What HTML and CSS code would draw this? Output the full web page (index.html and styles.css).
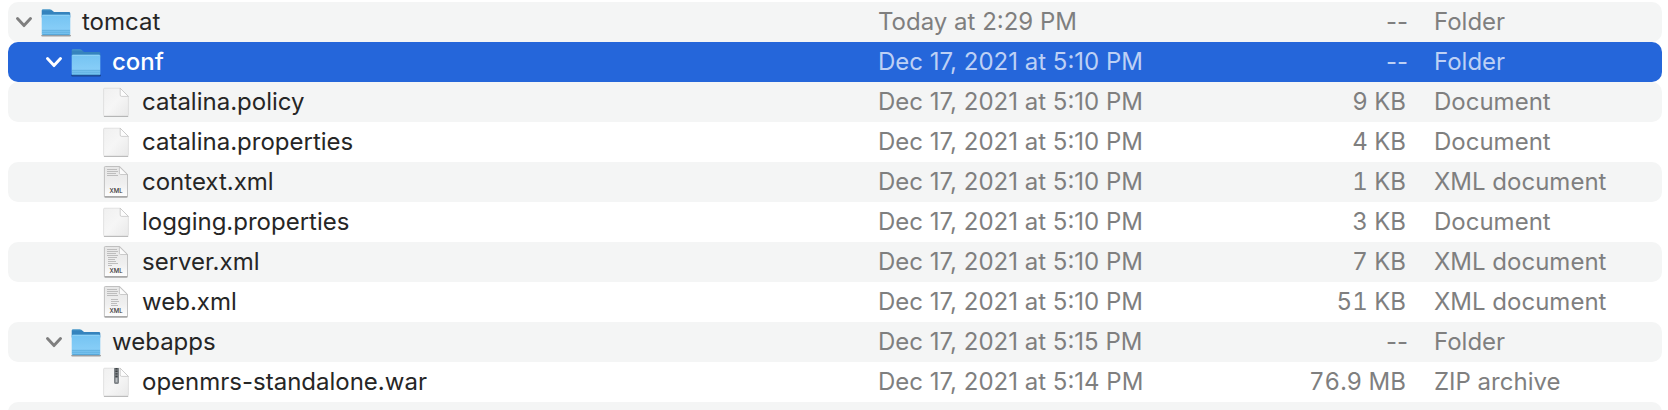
FILE: index.html
```
<!DOCTYPE html>
<html lang="en">
<head>
  <meta charset="UTF-8">
  <meta name="viewport" content="width=device-width, initial-scale=1.0">
  <title>tomcat</title>
  <link rel="stylesheet" href="styles.css">
</head>
<body>
  <svg class="sprite" aria-hidden="true">
    <defs>
      <linearGradient id="folder-back" x1="0" y1="0" x2="0" y2="1">
        <stop offset="0" stop-color="#4a9bcb"/>
        <stop offset="0.25" stop-color="#3583bd"/>
        <stop offset="1" stop-color="#3583bd"/>
      </linearGradient>
      <linearGradient id="folder-front" x1="0" y1="0" x2="0" y2="1">
        <stop offset="0" stop-color="#74c3f2"/>
        <stop offset="0.7" stop-color="#86cdf7"/>
        <stop offset="1" stop-color="#6dbdec"/>
      </linearGradient>
      <linearGradient id="paper" x1="0" y1="0" x2="1" y2="1">
        <stop offset="0" stop-color="#f0f0f0"/>
        <stop offset="0.5" stop-color="#f6f6f6"/>
        <stop offset="1" stop-color="#e9e9e9"/>
      </linearGradient>
      <linearGradient id="paper-xml" x1="0" y1="0" x2="0" y2="1">
        <stop offset="0" stop-color="#e6e6e6"/>
        <stop offset="0.6" stop-color="#f0f0f0"/>
        <stop offset="1" stop-color="#ffffff"/>
      </linearGradient>
    </defs>
    <symbol id="chevron" viewBox="0 0 16 16">
      <path d="M1.5 4.6 8 11.6 14.5 4.6" fill="none" stroke="currentColor" stroke-width="2.9" stroke-linecap="round" stroke-linejoin="round"/>
    </symbol>
    <symbol id="folder" viewBox="0 0 32 32">
      <path d="M2 29.6h28.2" stroke="#000" stroke-opacity="0.35" stroke-width="1.6" stroke-linecap="round"/>
      <path d="M1.7 4.6q0-1.4 1.4-1.4h6.6q1 0 1.7.6l2 1.7q.7.6 1.7.6h13.8q1.4 0 1.4 1.4v4H1.7z" fill="url(#folder-back)"/>
      <path d="M1.7 9.8q0-1.1 1.1-1.1h26.4q1.1 0 1.1 1.1v18q0 1.2-1.2 1.2H2.9q-1.2 0-1.2-1.2z" fill="url(#folder-front)"/>
      <path d="M2.6 9.3h26.8" stroke="#9cd9fa" stroke-width="0.8"/>
      <path d="M2 24.4h28M2 26.2h28" stroke="#58a9da" stroke-width="0.7"/>
      <path d="M2.4 28.7h27.2" stroke="#4c9acb" stroke-width="0.8"/>
    </symbol>
    <symbol id="file" viewBox="0 0 32 32">
      <path d="M4.4 30.3h23.3" stroke="#000" stroke-opacity="0.3" stroke-width="1.2" stroke-linecap="round"/>
      <path d="M3.6 3.2q0-1 1-1h15.6l8.2 8.2v18.4q0 1.2-1.2 1.2H4.8q-1.2 0-1.2-1.2z" fill="url(#paper)" stroke="#d2d2d2" stroke-width="0.6"/>
      <path d="M20.2 2.2v6.8q0 1.4 1.4 1.4h6.8z" fill="#fdfdfd" stroke="#bdbdbd" stroke-width="0.7"/>
    </symbol>
    <symbol id="xml" viewBox="0 0 32 32">
      <path d="M4.4 1.4q0-.9.9-.9h14.4l7.8 7.8v22q0 .7-.7.7H5.1q-.7 0-.7-.7z" fill="url(#paper-xml)" stroke="#bababa" stroke-width="0.9"/>
      <path d="M4.6 30.9h22.8" stroke="#858585" stroke-width="1"/>
      <path d="M19.4.8v6.4q0 1.3 1.3 1.3h6.6z" fill="#fbfbfb" stroke="#b8b8b8" stroke-width="0.7"/>
    </symbol>
    <symbol id="zip" viewBox="0 0 32 32">
      <use href="#file"/>
      <path d="M14 2h5v14.5q0 1.4-1.4 1.4h-2.2q-1.4 0-1.4-1.4z" fill="#7e8387"/>
      <path d="M16.5 2v10" stroke="#3d4144" stroke-width="2.2" stroke-dasharray="1.4 1.2"/>
      <path d="M16.5 11.8v4.4" stroke="#b9bdc0" stroke-width="1.8"/>
    </symbol>
  </svg>

  <main>
    <table class="file-list" aria-label="Files">
      <colgroup>
        <col>
        <col class="col-date">
        <col class="col-size">
        <col class="col-kind">
      </colgroup>
      <tbody>
        <tr>
          <td>
            <div class="name">
              <button class="toggle" type="button" aria-expanded="true" aria-label="Collapse tomcat"><svg><use href="#chevron"/></svg></button>
              <svg class="icon"><use href="#folder"/></svg>
              <span>tomcat</span>
            </div>
          </td>
          <td>Today at 2:29 PM</td>
          <td class="size none">--</td>
          <td>Folder</td>
        </tr>
        <tr class="selected" aria-selected="true">
          <td>
            <div class="name level-1">
              <button class="toggle" type="button" aria-expanded="true" aria-label="Collapse conf"><svg><use href="#chevron"/></svg></button>
              <svg class="icon"><use href="#folder"/></svg>
              <span>conf</span>
            </div>
          </td>
          <td>Dec 17, 2021 at 5:10 PM</td>
          <td class="size none">--</td>
          <td>Folder</td>
        </tr>
        <tr>
          <td>
            <div class="name level-2">
              <svg class="icon"><use href="#file"/></svg>
              <span>catalina.policy</span>
            </div>
          </td>
          <td>Dec 17, 2021 at 5:10 PM</td>
          <td class="size">9 KB</td>
          <td>Document</td>
        </tr>
        <tr>
          <td>
            <div class="name level-2">
              <svg class="icon"><use href="#file"/></svg>
              <span>catalina.properties</span>
            </div>
          </td>
          <td>Dec 17, 2021 at 5:10 PM</td>
          <td class="size">4 KB</td>
          <td>Document</td>
        </tr>
        <tr>
          <td>
            <div class="name level-2">
              <svg class="icon" viewBox="0 0 32 32">
                <use href="#xml"/>
                <path class="lines" d="M7 3.5h10M7 5.5h11M7 7.5h9M7 9.5h11"/>
                <text class="icon-label" x="16" y="27" text-anchor="middle">XML</text>
              </svg>
              <span>context.xml</span>
            </div>
          </td>
          <td>Dec 17, 2021 at 5:10 PM</td>
          <td class="size">1 KB</td>
          <td>XML document</td>
        </tr>
        <tr>
          <td>
            <div class="name level-2">
              <svg class="icon"><use href="#file"/></svg>
              <span>logging.properties</span>
            </div>
          </td>
          <td>Dec 17, 2021 at 5:10 PM</td>
          <td class="size">3 KB</td>
          <td>Document</td>
        </tr>
        <tr>
          <td>
            <div class="name level-2">
              <svg class="icon" viewBox="0 0 32 32">
                <use href="#xml"/>
                <path class="lines" d="M7 3.5h10M7 5.5h11M7 7.5h9M7 9.5h11M8 11.5h9M8 13.5h7M8 15.5h8M8 17.5h10M8 19.5h4"/>
                <text class="icon-label" x="16" y="27" text-anchor="middle">XML</text>
              </svg>
              <span>server.xml</span>
            </div>
          </td>
          <td>Dec 17, 2021 at 5:10 PM</td>
          <td class="size">7 KB</td>
          <td>XML document</td>
        </tr>
        <tr>
          <td>
            <div class="name level-2">
              <svg class="icon" viewBox="0 0 32 32">
                <use href="#xml"/>
                <path class="lines" d="M7 3.5h10M7 5.5h11M7 7.5h10M7 9.5h11M11 13.5h7M11 15.5h8M11 17.5h6M11 19.5h7"/>
                <text class="icon-label" x="16" y="27" text-anchor="middle">XML</text>
              </svg>
              <span>web.xml</span>
            </div>
          </td>
          <td>Dec 17, 2021 at 5:10 PM</td>
          <td class="size">51 KB</td>
          <td>XML document</td>
        </tr>
        <tr>
          <td>
            <div class="name level-1">
              <button class="toggle" type="button" aria-expanded="true" aria-label="Collapse webapps"><svg><use href="#chevron"/></svg></button>
              <svg class="icon"><use href="#folder"/></svg>
              <span>webapps</span>
            </div>
          </td>
          <td>Dec 17, 2021 at 5:15 PM</td>
          <td class="size none">--</td>
          <td>Folder</td>
        </tr>
        <tr>
          <td>
            <div class="name level-2">
              <svg class="icon"><use href="#zip"/></svg>
              <span>openmrs-standalone.war</span>
            </div>
          </td>
          <td>Dec 17, 2021 at 5:14 PM</td>
          <td class="size">76.9 MB</td>
          <td>ZIP archive</td>
        </tr>
        <tr>
          <td></td>
          <td></td>
          <td></td>
          <td></td>
        </tr>
      </tbody>
    </table>
  </main>
</body>
</html>
```
FILE: styles.css
```
:root {
  --stripe: #f4f5f5;
  --selected: #2566da;
  --text: #262626;
  --muted: #7f7f7f;
}

* {
  box-sizing: border-box;
}

body {
  margin: 0;
  background-color: white;
  color: var(--text);
  font-family: Inter, "Liberation Sans", sans-serif;
  font-size: 24px;
  line-height: 32px;
}

main {
  height: 100vh;
  padding: 2px 6px 0 8px;
  overflow: hidden;
}

.sprite {
  position: absolute;
  width: 0;
  height: 0;
}

.file-list {
  width: 100%;
  table-layout: fixed;
  border-collapse: separate;
  border-spacing: 0;
}

.col-date {
  width: 348px;
}

.col-size {
  width: 208px;
}

.col-kind {
  width: 228px;
}

td {
  height: 40px;
  padding: 0;
  color: var(--muted);
  white-space: nowrap;
}

tr:nth-child(odd) td {
  background-color: var(--stripe);
}

td:first-child {
  border-radius: 10px 0 0 10px;
}

td:last-child {
  border-radius: 0 10px 10px 0;
}

.size {
  padding-right: 28px;
  text-align: right;
  font-variant-numeric: tabular-nums;
}

.size.none {
  padding-right: 26px;
  font-variant-numeric: normal;
}

.name {
  display: flex;
  align-items: center;
  padding-left: 8px;
  color: var(--text);
}

.level-1 {
  padding-left: 38px;
}

/* files have no toggle, so its width is added here */
.level-2 {
  padding-left: 92px;
}

.toggle {
  display: flex;
  width: 16px;
  height: 16px;
  margin-right: 8px;
  padding: 0;
  border: 0;
  background: none;
  color: var(--muted);
}

.toggle svg {
  width: 16px;
  height: 16px;
}

.icon {
  width: 32px;
  height: 32px;
  margin-right: 10px;
}

.icon-label {
  fill: #333;
  font-size: 6px;
  font-weight: 500;
}

.lines {
  fill: none;
  stroke: #bdbdbd;
  stroke-width: 1;
}

.selected td {
  background-color: var(--selected);
  color: #bdd0f5;
}

.selected .name,
.selected .toggle {
  color: white;
}

.selected .name {
  font-weight: 500;
}
```
